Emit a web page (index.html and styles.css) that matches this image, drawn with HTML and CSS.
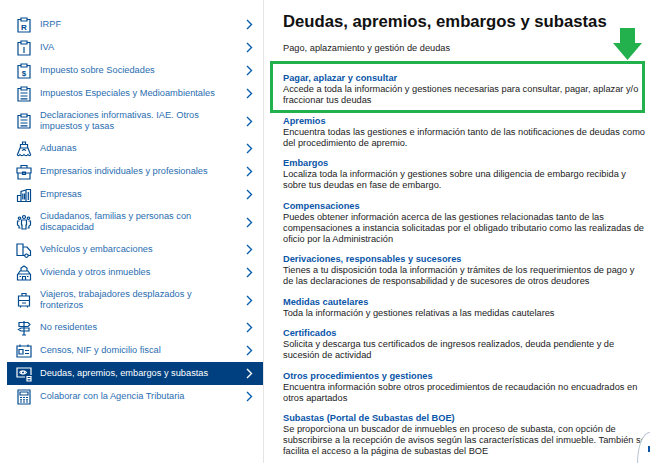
FILE: index.html
```html
<!DOCTYPE html>
<html lang="es">
<head>
  <meta charset="UTF-8">
  <title>Deudas, apremios, embargos y subastas</title>
  <link rel="stylesheet" href="styles.css">
</head>
<body>
  <div class="page">
    <div class="sidebar">
      <a class="nav-item"><svg class="ico" viewBox="0 0 16 16"><path d="M5 2.500H2v12.500h12V2.500h-3M5 1h6v3H5z"/><text x="8" y="12.500" class="ico-letter">R</text></svg><span class="nav-label">IRPF</span><svg class="chev" viewBox="0 0 7 11"><path d="M1 1l4.500 4.500L1 10"/></svg></a>
      <a class="nav-item"><svg class="ico" viewBox="0 0 16 16"><path d="M5 2.500H2v12.500h12V2.500h-3M5 1h6v3H5z"/><path d="M8 7v6"/></svg><span class="nav-label">IVA</span><svg class="chev" viewBox="0 0 7 11"><path d="M1 1l4.500 4.500L1 10"/></svg></a>
      <a class="nav-item"><svg class="ico" viewBox="0 0 16 16"><path d="M5 2.500H2v12.500h12V2.500h-3M5 1h6v3H5z"/><text x="8" y="13" class="ico-letter">$</text></svg><span class="nav-label">Impuesto sobre Sociedades</span><svg class="chev" viewBox="0 0 7 11"><path d="M1 1l4.500 4.500L1 10"/></svg></a>
      <a class="nav-item"><svg class="ico" viewBox="0 0 16 16"><path d="M5 2.500H2v12.500h12V2.500h-3M5 1h6v3H5zM4.500 7h7M4.500 10h7M4.500 12.800h7"/></svg><span class="nav-label">Impuestos Especiales y Medioambientales</span><svg class="chev" viewBox="0 0 7 11"><path d="M1 1l4.500 4.500L1 10"/></svg></a>
      <a class="nav-item"><svg class="ico" viewBox="0 0 16 16"><path d="M5 2.500H2v12.500h12V2.500h-3M5 1h6v3H5zM4.500 7h7M4.500 10h7M4.500 12.800h7"/></svg><span class="nav-label">Declaraciones informativas. IAE. Otros impuestos y tasas</span><svg class="chev" viewBox="0 0 7 11"><path d="M1 1l4.500 4.500L1 10"/></svg></a>
      <a class="nav-item"><svg class="ico" viewBox="0 0 16 16"><path d="M6.500 1h3v2.500h-3zM4.500 7V3.500h7V7M2.500 11l1.500-4h8l1.500 4M6 9.500l2-1 2 1M1 13.500c1 1.500 2 1.500 3 0 1 1.500 3 1.500 4 0 1 1.500 3 1.500 4 0 1 1.500 2 1.500 3 0M2.500 11l-1 2.500M13.500 11l1 2.500"/></svg><span class="nav-label">Aduanas</span><svg class="chev" viewBox="0 0 7 11"><path d="M1 1l4.500 4.500L1 10"/></svg></a>
      <a class="nav-item"><svg class="ico" viewBox="0 0 16 16"><path d="M1 4h14v5H1zM2 9v6h12V9M5 4V1.500h6V4M6.500 8h3v2.500h-3z"/></svg><span class="nav-label">Empresarios individuales y profesionales</span><svg class="chev" viewBox="0 0 7 11"><path d="M1 1l4.500 4.500L1 10"/></svg></a>
      <a class="nav-item"><svg class="ico" viewBox="0 0 16 16"><path d="M1 14.500h14M1.500 14V8.500h3.500M5 14V4.500l5-1.500v11M10 2.500h4.500V14M6.800 6.500v6M8.500 6.500v6M12.300 5v8"/></svg><span class="nav-label">Empresas</span><svg class="chev" viewBox="0 0 7 11"><path d="M1 1l4.500 4.500L1 10"/></svg></a>
      <a class="nav-item"><svg class="ico" viewBox="0 0 16 16"><path d="M8 1.500a1.500 1.500 0 1 0 .01 0M3.500 3a1.200 1.200 0 1 0 .01 0M12.500 3a1.200 1.200 0 1 0 .01 0M5.500 6h5v5H10v4H6v-4h-.5zM3.500 7H1.500v4l1.500 1v2h1.500M12.500 7h2v4L13 12v2h-1.500"/></svg><span class="nav-label">Ciudadanos, familias y personas con discapacidad</span><svg class="chev" viewBox="0 0 7 11"><path d="M1 1l4.500 4.500L1 10"/></svg></a>
      <a class="nav-item"><svg class="ico" viewBox="0 0 16 16"><path d="M1 2h6v11.500H1zM7 5h4l3.500 4v4.500H12M7 13.500h2M10.500 12a1.700 1.700 0 1 0 .01 0"/></svg><span class="nav-label">Vehículos y embarcaciones</span><svg class="chev" viewBox="0 0 7 11"><path d="M1 1l4.500 4.500L1 10"/></svg></a>
      <a class="nav-item"><svg class="ico" viewBox="0 0 16 16"><path d="M5 6V3l3-2 3 2v3M2 9l2-3h8l2 3zM1.500 9v6h13V9M6.500 15v-3.500h3V15M3.500 11.500h1.500M11 11.500h1.500"/></svg><span class="nav-label">Vivienda y otros inmuebles</span><svg class="chev" viewBox="0 0 7 11"><path d="M1 1l4.500 4.500L1 10"/></svg></a>
      <a class="nav-item"><svg class="ico" viewBox="0 0 16 16"><path d="M2.500 4h11v10h-11zM6 4V1.500h4V4M2.500 8.500h11M6 11h4M4.500 14v1.500M11.500 14v1.500"/></svg><span class="nav-label">Viajeros, trabajadores desplazados y fronterizos</span><svg class="chev" viewBox="0 0 7 11"><path d="M1 1l4.500 4.500L1 10"/></svg></a>
      <a class="nav-item"><svg class="ico" viewBox="0 0 16 16"><path d="M8 1v14M6 15h4M3 2.500h9L14 4.500 12 6.500H3zM13 8H5L2.500 9.500 5 11h8z"/></svg><span class="nav-label">No residentes</span><svg class="chev" viewBox="0 0 7 11"><path d="M1 1l4.500 4.500L1 10"/></svg></a>
      <a class="nav-item"><svg class="ico" viewBox="0 0 16 16"><path d="M1 3h14v11H1zM3 6.500h4v4.500H3zM9 7.500h4M9 10.500h4M4 1.500V4M12 1.500V4"/></svg><span class="nav-label">Censos, NIF y domicilio fiscal</span><svg class="chev" viewBox="0 0 7 11"><path d="M1 1l4.500 4.500L1 10"/></svg></a>
      <a class="nav-item active"><svg class="ico" viewBox="0 0 16 16"><path d="M9 11H1V2h14v7M3.500 6.500a4 3 0 0 1 7 0 4 3 0 0 1-7 0M7 5a1.500 1.500 0 1 0 .01 0M11 10.500h4v4.500h-4zM11 12.700h4"/></svg><span class="nav-label">Deudas, apremios, embargos y subastas</span><svg class="chev" viewBox="0 0 7 11"><path d="M1 1l4.500 4.500L1 10"/></svg></a>
      <a class="nav-item"><svg class="ico" viewBox="0 0 16 16"><path d="M2 1h12v14H2zM4 3h8v3H4zM4 8.500h2M7 8.500h2M10 8.500h2M4 10.800h2M7 10.800h2M10 10.800h2M4 13h2M7 13h2M10 13h2"/></svg><span class="nav-label">Colaborar con la Agencia Tributaria</span><svg class="chev" viewBox="0 0 7 11"><path d="M1 1l4.500 4.500L1 10"/></svg></a>
    </div>

    <div class="content">
      <h1>Deudas, apremios, embargos y subastas</h1>
      <p class="intro">Pago, aplazamiento y gestión de deudas</p>

      <div class="entry entry-marked">
        <a class="entry-title">Pagar, aplazar y consultar</a>
        <p>Accede a toda la información y gestiones necesarias para consultar, pagar, aplazar y/o fraccionar tus deudas</p>
      </div>
      <div class="entry">
        <a class="entry-title">Apremios</a>
        <p>Encuentra todas las gestiones e información tanto de las notificaciones de deudas como del procedimiento de apremio.</p>
      </div>
      <div class="entry">
        <a class="entry-title">Embargos</a>
        <p>Localiza toda la información y gestiones sobre una diligencia de embargo recibida y sobre tus deudas en fase de embargo.</p>
      </div>
      <div class="entry">
        <a class="entry-title">Compensaciones</a>
        <p>Puedes obtener información acerca de las gestiones relacionadas tanto de las compensaciones a instancia solicitadas por el obligado tributario como las realizadas de oficio por la Administración</p>
      </div>
      <div class="entry">
        <a class="entry-title">Derivaciones, responsables y sucesores</a>
        <p>Tienes a tu disposición toda la información y trámites de los requerimientos de pago y de las declaraciones de responsabilidad y de sucesores de otros deudores</p>
      </div>
      <div class="entry">
        <a class="entry-title">Medidas cautelares</a>
        <p>Toda la información y gestiones relativas a las medidas cautelares</p>
      </div>
      <div class="entry">
        <a class="entry-title">Certificados</a>
        <p>Solicita y descarga tus certificados de ingresos realizados, deuda pendiente y de sucesión de actividad</p>
      </div>
      <div class="entry">
        <a class="entry-title">Otros procedimientos y gestiones</a>
        <p>Encuentra información sobre otros procedimientos de recaudación no encuadrados en otros apartados</p>
      </div>
      <div class="entry last">
        <a class="entry-title">Subastas (Portal de Subastas del BOE)</a>
        <p>Se proporciona un buscador de inmuebles en proceso de subasta, con opción de subscribirse a la recepción de avisos según las características del inmueble. También se facilita el acceso a la página de subastas del BOE</p>
      </div>
    </div>
  </div>

  <svg class="arrow" viewBox="0 0 29 32"><path d="M7 0h15v15h7L14.500 32 0 15h7z"/></svg>
  <div class="chat-bubble"><span class="chat-mark"></span></div>
</body>
</html>
```

FILE: styles.css
```css
html, body { height: 100%; }
body { margin: 0; background-color: #fff; font-family: "Liberation Sans", Arial, sans-serif; font-size: 9.25px; line-height: 11px; color: #222; overflow: hidden; }
.page { display: flex; height: 463px; overflow: hidden; }

.sidebar { box-sizing: border-box; width: 264px; height: 463px; padding: 13px 0 0 7px; border-right: 1px solid #e4e4e4; flex-shrink: 0; }
.nav-item { box-sizing: border-box; display: flex; align-items: center; min-height: 23px; padding: 5px 10px 5px 9px; color: #2a6db0; }
.nav-item .ico { width: 16px; height: 16px; margin: -3px 8px -3px 0; flex-shrink: 0; fill: none; stroke: #004a8f; stroke-width: 1.2; }
.ico-letter { font-size: 8px; font-weight: bold; fill: #004a8f; stroke: none; text-anchor: middle; }
.nav-label { flex: 1; padding-right: 25px; }
.chev { width: 7px; height: 11px; fill: none; stroke: #0a5cad; stroke-width: 1.4; flex-shrink: 0; }
.nav-item.active { background-color: #004080; color: #fff; }
.nav-item.active .ico, .nav-item.active .chev { stroke: #fff; }

.content { flex: 1; padding: 12px 0 0 19px; min-width: 0; }
h1 { margin: 0 0 10.5px; font-size: 16.7px; line-height: 20px; font-weight: bold; color: #111; }
.intro { margin: 0 0 7.5px; }
.entry { margin: 0 4px 9.5px 0; }
.entry.last { margin-bottom: 0; }
.entry p { margin: 0; }
.entry-title { display: block; font-weight: bold; color: #0a55a8; }
.entry-marked { margin: 0 5px 2.5px -13px; padding: 8.5px 0 4.5px 10px; border: 3px solid #22b14c; }

.arrow { position: absolute; left: 613px; top: 28px; width: 29px; height: 32px; fill: #22b14c; }
.chat-bubble { position: absolute; left: 637px; top: 432px; box-sizing: border-box; width: 13px; height: 31px; border-left: 1px solid #b9c6d4; border-top: 1px solid #b9c6d4; border-top-left-radius: 13px 31px; background-color: #fff; }
.chat-mark { position: absolute; left: 10px; top: 13px; width: 2px; height: 6px; background-color: #0a55a8; }
```
